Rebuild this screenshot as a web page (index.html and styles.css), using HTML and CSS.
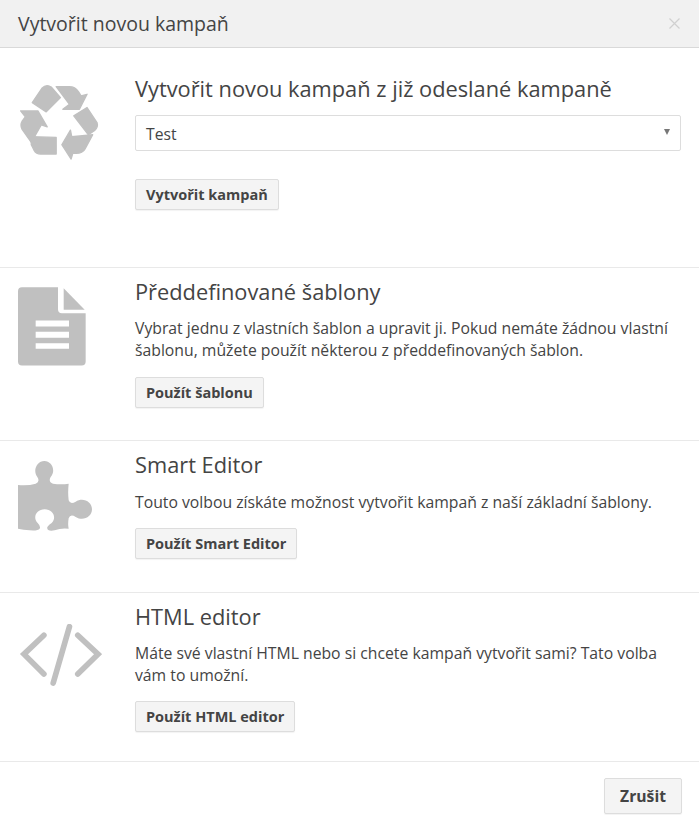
FILE: index.html
```html
<!DOCTYPE html>
<html lang="cs">
<head>
<meta charset="utf-8">
<title>Vytvořit novou kampaň</title>
<link rel="stylesheet" href="styles.css">
</head>
<body>
<div class="dialog">
  <header class="head">
    <h1 class="title">Vytvořit novou kampaň</h1>
    <svg class="close" viewBox="0 0 11 11" width="11" height="11"><path d="M.5.5l10 10M10.5.5l-10 10" fill="none" stroke="#d0d0d0" stroke-width="1.2"/></svg>
  </header>

  <section class="row row-recycle">
    <div class="icon">
      <svg class="ico-recycle" viewBox="50 250 250 230" width="83" height="77">
        <g fill="#c0c0c0" stroke="#c0c0c0" stroke-width="4" stroke-linejoin="round">
          <path d="M93 305L122 262Q135 248 150 258L178 290L135 333Z"/>
          <path d="M165 257H205Q222 257 232 272L240 285L258 280L235 325H185L205 310Z"/>
          <path d="M258 320L288 365Q292 378 282 388L262 402L218 345Z"/>
          <path d="M275 402L252 445Q245 458 225 458H215L210 475L182 432L208 388L212 408Z"/>
          <path d="M90 408L165 410V460H118Q105 460 98 448L90 432Z"/>
          <path d="M58 330H110L138 378L120 372L90 425L62 385Q56 372 62 362L72 348Z"/>
        </g>
      </svg>
    </div>
    <div class="main">
      <h2 class="heading">Vytvořit novou kampaň z již odeslané kampaně</h2>
      <div class="select"><span class="select-value">Test</span><i class="caret"></i></div>
      <button class="btn btn-first">Vytvořit kampaň</button>
    </div>
  </section>

  <section class="row row-template">
    <div class="icon">
      <svg class="ico-doc" viewBox="55 82 204 236" width="68" height="79">
        <path fill="#c0c0c0" d="M67 82H175V148Q175 160 187 160H258V305Q258 317 246 317H67Q55 317 55 305V94Q55 82 67 82Z"/>
        <path fill="#c0c0c0" d="M192 85L255 150H192Z"/>
        <path fill="#fff" d="M108 182H208V200H108ZM108 216H208V234H108ZM108 250H208V267H108Z"/>
      </svg>
    </div>
    <div class="main">
      <h2 class="heading">Předdefinované šablony</h2>
      <p class="text">Vybrat jednu z vlastních šablon a upravit ji. Pokud nemáte žádnou vlastní šablonu, můžete použít některou z předdefinovaných šablon.</p>
      <button class="btn">Použít šablonu</button>
    </div>
  </section>

  <section class="row row-smart">
    <div class="icon">
      <svg class="ico-puzzle" viewBox="55 600 222 210" width="74" height="70">
        <path fill="#c0c0c0" d="M55 672Q85 675 108 668Q122 662 113 648C98 628 112 600 134 600C156 600 170 628 153 648Q145 662 160 668Q185 672 207 668Q204 695 207 718Q212 732 228 722C250 708 277 722 277 745C277 768 250 782 228 768Q212 758 207 772Q204 790 207 803Q185 800 165 808Q140 812 143 798Q148 790 156 786C172 770 160 745 135 745C110 745 98 770 114 786Q124 796 120 803Q115 810 90 808Q70 806 55 803Z"/>
      </svg>
    </div>
    <div class="main">
      <h2 class="heading">Smart Editor</h2>
      <p class="text">Touto volbou získáte možnost vytvořit kampaň z naší základní šablony.</p>
      <button class="btn">Použít Smart Editor</button>
    </div>
  </section>

  <section class="row row-html">
    <div class="icon">
      <svg class="ico-code" viewBox="55 100 250 185" width="83" height="62">
        <g fill="none" stroke="#c0c0c0" stroke-width="17" stroke-linecap="round" stroke-linejoin="miter">
          <path d="M130 133L70 190L130 250"/>
          <path d="M232 133L293 190L232 250"/>
          <path d="M207 107L158 277"/>
        </g>
      </svg>
    </div>
    <div class="main">
      <h2 class="heading">HTML editor</h2>
      <p class="text">Máte své vlastní HTML nebo si chcete kampaň vytvořit sami? Tato volba vám to umožní.</p>
      <button class="btn">Použít HTML editor</button>
    </div>
  </section>

  <footer class="foot">
    <button class="btn btn-cancel">Zrušit</button>
  </footer>
</div>
</body>
</html>
```
FILE: styles.css
```css
* { box-sizing: border-box; }
html, body { margin: 0; padding: 0; background: #fff; }
body { font-family: "Open Sans", sans-serif; color: #444; }
.dialog { width: 699px; height: 815px; overflow: hidden; }

.head {
  height: 48px;
  background: #f1f1f1;
  border-bottom: 1px solid #d9d9d9;
  display: flex;
  align-items: center;
  justify-content: space-between;
  padding: 0 19px 0 18px;
}
.title { margin: 0; font-size: 19.5px; font-weight: 400; line-height: 24px; color: #444; }
.close { display: block; }

.row {
  display: flex;
  border-bottom: 1px solid #e9e9e9;
}
.row-recycle { height: 220px; padding-top: 26px; }
.row-template { height: 173px; padding-top: 9px; }
.row-smart { height: 152px; padding-top: 9px; }
.row-html { height: 169px; padding-top: 9px; }

.icon { width: 135px; flex: none; padding-left: 18px; }
.icon svg { display: block; }
.ico-recycle { margin-top: 10px; }
.ico-doc { margin-top: 10px; }
.ico-puzzle { margin-top: 11px; }
.ico-code { margin-top: 22px; margin-left: 1px; }

.main { flex: 1; min-width: 0; padding-right: 18px; }
.heading { margin: 0 0 12px; font-size: 21.8px; font-weight: 400; line-height: 29px; color: #444; }
.row-html .heading, .row-template .heading { margin-bottom: 11px; }
.text { margin: 0 0 15px; font-size: 15.75px; line-height: 22px; color: #444; }
.row-template .text { margin-bottom: 16px; }

.select {
  height: 36px;
  border: 1px solid #ddd;
  border-radius: 2px;
  background: #fff;
  display: flex;
  align-items: center;
  justify-content: space-between;
  padding: 0 10px;
  font-size: 15.7px;
  margin-bottom: 28px;
}
.select-value { padding-top: 2px; }
.caret {
  width: 0;
  height: 0;
  border-left: 3.5px solid transparent;
  border-right: 3.5px solid transparent;
  border-top: 6px solid #777;
  margin-top: -2px;
}

.btn {
  display: block;
  height: 31px;
  padding: 0 10px;
  border: 1px solid #ddd;
  border-radius: 2px;
  background: #f4f4f4;
  box-shadow: 0 1px 1px rgba(0, 0, 0, .05);
  font-family: "Open Sans", sans-serif;
  font-size: 14.5px;
  font-weight: 700;
  color: #444;
}

.foot {
  display: flex;
  justify-content: flex-end;
  padding: 16px 17px 0 0;
}
.btn-cancel { height: 36px; padding: 0 15px; font-size: 15.7px; }
```
